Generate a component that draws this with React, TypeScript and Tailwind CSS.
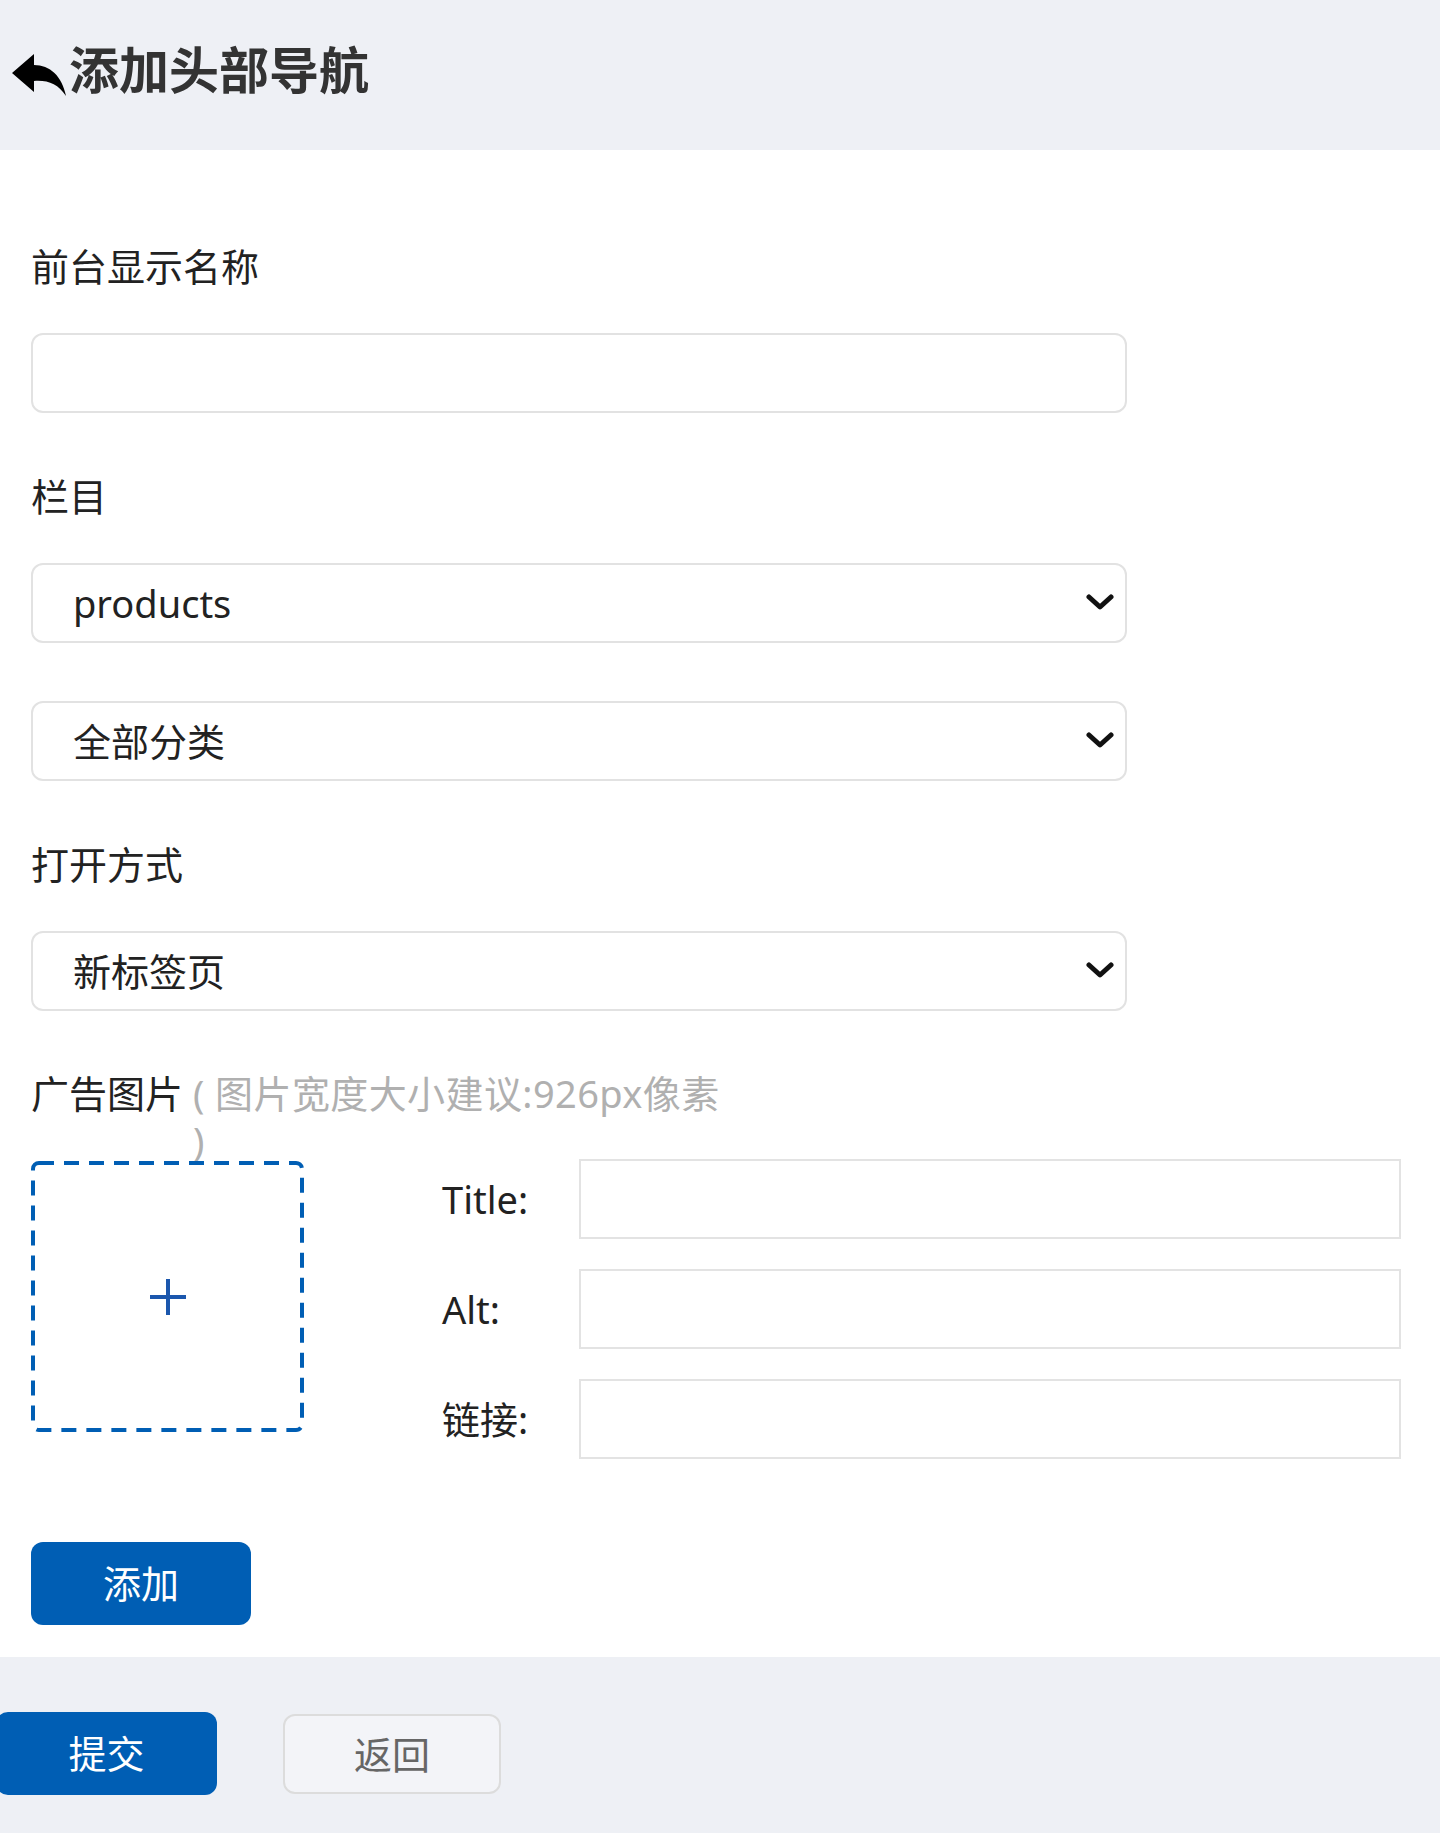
import { useState } from "react";

const font = { fontFamily: '"Noto Sans", "Noto Sans CJK SC", sans-serif' };

function Chevron() {
    return (
        <svg
            width="28"
            height="18"
            viewBox="0 0 28 18"
            className="pointer-events-none absolute right-[13px] top-1/2 -translate-y-1/2"
        >
            <path d="M3 3 L14 13 L25 3" fill="none" stroke="#111" strokeWidth="5" strokeLinecap="round" strokeLinejoin="round" />
        </svg>
    );
}

function Select(props: { options: string[]; className?: string }) {
    const [value, setValue] = useState(props.options[0]);
    return (
        <div className={"relative w-[1096px] " + (props.className ?? "")}>
            <select
                value={value}
                onChange={(e) => setValue(e.target.value)}
                className="h-[80px] w-full appearance-none rounded-[12px] border-2 border-[#e2e2e2] bg-white pl-[40px] text-[38px] text-[#222] outline-none"
                style={font}
            >
                {props.options.map((o) => (
                    <option key={o}>{o}</option>
                ))}
            </select>
            <Chevron />
        </div>
    );
}

function Label(props: { children: React.ReactNode; className?: string }) {
    return (
        <div className={"h-[48px] text-[38px] leading-[48px] text-[#222] " + (props.className ?? "")}>
            {props.children}
        </div>
    );
}

export default function App() {
    const rows = ["Title:", "Alt:", "链接:"];

    return (
        <div className="w-[1440px] bg-white" style={font}>
            {/* header */}
            <div className="flex h-[150px] items-center bg-[#eef0f5] pb-[10px] pl-[12px]">
                <svg width="54" height="43" viewBox="0 0 54 43" className="mt-[10px]">
                    <path d="M0 19 L22 0 L22 11 C38 11 50 22 54 42 C46 30 36 26 22 27 L22 38 Z" fill="#000" />
                </svg>
                <h1 className="ml-[3px] text-[50px] font-bold text-[#333]">添加头部导航</h1>
            </div>

            {/* form */}
            <div className="pb-[32px] pl-[31px] pr-[39px] pt-[92px]">
                <Label>前台显示名称</Label>
                <input className="mt-[43px] block h-[80px] w-[1096px] rounded-[12px] border-2 border-[#e2e2e2] px-[40px] text-[38px] outline-none" />

                <Label className="mt-[59px]">栏目</Label>
                <Select className="mt-[43px]" options={["products", "news", "about"]} />
                <Select className="mt-[58px]" options={["全部分类"]} />

                <Label className="mt-[59px]">打开方式</Label>
                <Select className="mt-[43px]" options={["新标签页", "当前页"]} />

                <div className="mt-[59px] flex h-[48px] w-[696px] text-[38px] leading-[47px]">
                    <span className="shrink-0 text-[#222]">广告图片</span>
                    <span className="ml-[10px] tracking-[0.4px] text-[#b0b0b0]">( 图片宽度大小建议:926px像素 )</span>
                </div>

                <div className="mt-[41px] flex items-start">
                    <div className="relative mt-[2px] flex h-[271px] w-[273px] shrink-0 cursor-pointer items-center justify-center">
                        <svg width="273" height="271" className="absolute inset-0">
                            <rect
                                x="2"
                                y="2"
                                width="269"
                                height="267"
                                rx="6"
                                fill="none"
                                stroke="#005eb4"
                                strokeWidth="4"
                                strokeDasharray="15 10"
                            />
                        </svg>
                        <svg width="36" height="36" viewBox="0 0 36 36">
                            <path d="M0 18 H36 M18 0 V36" stroke="#1b57ad" strokeWidth="4" />
                        </svg>
                    </div>
                    <div className="ml-[138px] flex flex-1 flex-col gap-[30px]">
                        {rows.map((r) => (
                            <div key={r} className="flex items-center">
                                <span className="w-[137px] text-[38px] text-[#222]">{r}</span>
                                <input className="h-[80px] flex-1 border-2 border-[#e3e3e3] px-4 text-[34px] outline-none" />
                            </div>
                        ))}
                    </div>
                </div>

                <button className="mt-[83px] h-[83px] w-[220px] rounded-[12px] bg-[#005eb4] text-[38px] text-white">
                    添加
                </button>
            </div>

            {/* footer */}
            <div className="flex h-[176px] items-start gap-[66px] bg-[#eef0f5] pt-[55px]">
                <button className="-ml-[4px] h-[83px] w-[221px] rounded-[12px] bg-[#005eb4] text-[38px] text-white">
                    提交
                </button>
                <button className="mt-[2px] h-[80px] w-[218px] rounded-[12px] border-2 border-[#dcdcdc] bg-[#f3f4f8] text-[38px] text-[#666]">
                    返回
                </button>
            </div>
        </div>
    );
}
